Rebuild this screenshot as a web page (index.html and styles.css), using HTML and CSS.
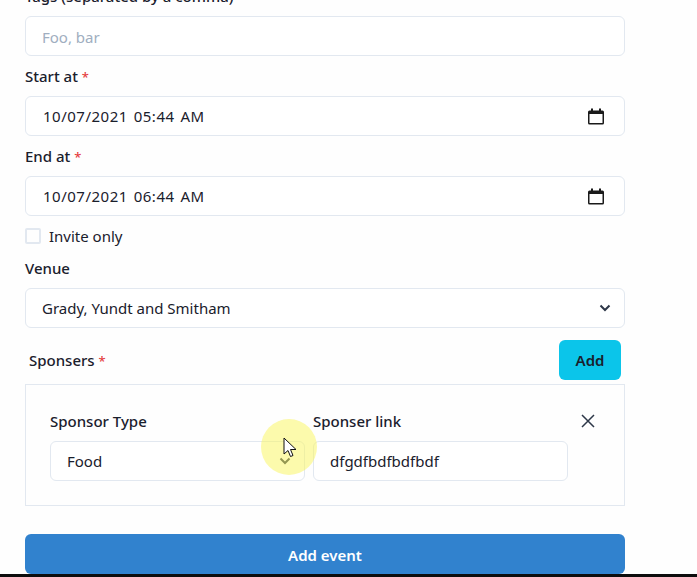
FILE: index.html
```html
<!DOCTYPE html>
<html lang="en">
<head>
    <meta charset="UTF-8">
    <title>Add event</title>
    <link rel="stylesheet" href="styles.css">
</head>
<body>
    <form class="event-form">
        <label class="field-label">Tags (separated by a comma)</label>
        <input class="field-input tags-input" type="text" placeholder="Foo, bar">

        <label class="field-label">Start at <span class="required">*</span></label>
        <div class="field-input date-input">
            <span>10/07/2021 05:44 AM</span>
            <svg class="calendar-icon" viewBox="0 0 16 17" width="16" height="17"><path d="M3 .5h2v2h6v-2h2v2h1.500A1.500 1.500 0 0 1 16 4v11a1.500 1.500 0 0 1-1.500 1.500h-13A1.500 1.500 0 0 1 0 15V4a1.500 1.500 0 0 1 1.500-1.500H3zM1.500 6v9h13V6z" fill="#1a1a1a" fill-rule="evenodd"/></svg>
        </div>

        <label class="field-label">End at <span class="required">*</span></label>
        <div class="field-input date-input">
            <span>10/07/2021 06:44 AM</span>
            <svg class="calendar-icon" viewBox="0 0 16 17" width="16" height="17"><path d="M3 .5h2v2h6v-2h2v2h1.500A1.500 1.500 0 0 1 16 4v11a1.500 1.500 0 0 1-1.500 1.500h-13A1.500 1.500 0 0 1 0 15V4a1.500 1.500 0 0 1 1.500-1.500H3zM1.500 6v9h13V6z" fill="#1a1a1a" fill-rule="evenodd"/></svg>
        </div>

        <label class="checkbox-row">
            <span class="checkbox"></span>
            <span>Invite only</span>
        </label>

        <label class="field-label">Venue</label>
        <div class="field-input select-input">
            <span>Grady, Yundt and Smitham</span>
            <svg class="chevron" viewBox="0 0 12 8" width="12" height="8"><path d="M1.500 1.500 6 6l4.500-4.500" fill="none" stroke="#2d3748" stroke-width="2"/></svg>
        </div>

        <div class="sponsors-head">
            <span class="sponsors-title">Sponsers <span class="required">*</span></span>
            <button class="add-btn" type="button">Add</button>
        </div>

        <div class="sponsor-box">
            <div class="sponsor-col">
                <label class="field-label">Sponsor Type</label>
                <div class="field-input select-input">
                    <span>Food</span>
                    <svg class="chevron" viewBox="0 0 12 8" width="12" height="8"><path d="M1.500 1.500 6 6l4.500-4.500" fill="none" stroke="#2d3748" stroke-width="2"/></svg>
                </div>
            </div>
            <div class="sponsor-col">
                <label class="field-label">Sponser link</label>
                <div class="field-input">dfgdfbdfbdfbdf</div>
            </div>
            <svg class="remove-icon" viewBox="0 0 14 14" width="14" height="14"><path d="M1 1l12 12M13 1 1 13" fill="none" stroke="#2d3748" stroke-width="1.500"/></svg>
        </div>

        <button class="submit-btn" type="button">Add event</button>
    </form>
    <div class="taskbar"></div>

    <div class="cursor-highlight"></div>
    <svg class="cursor" viewBox="0 0 14 22" width="14" height="22"><path d="M1 1v16l4-3.500 2.500 6 2.500-1-2.500-6H13z" fill="#fff" stroke="#111" stroke-width="1"/></svg>
</body>
</html>
```

FILE: styles.css
```css
* {
    margin: 0;
    padding: 0;
    box-sizing: border-box;
}

html, body {
    height: 577px;
    overflow: hidden;
}

body {
    position: relative;
    background-color: #fefefe;
    color: #1a202c;
    font-family: "Noto Sans", "Open Sans", sans-serif;
    font-size: 15px;
    line-height: 24px;
}

.event-form {
    width: 600px;
    margin-top: -16px;
    margin-left: 25px;
    display: flex;
    flex-direction: column;
}

.field-label {
    display: block;
    height: 24px;
    margin-bottom: 8px;
    font-weight: 500;
    font-size: 15px;
    color: #1a202c;
}

.required {
    color: #e53e3e;
    font-size: 13px;
}

.field-input {
    width: 100%;
    height: 40px;
    padding: 0 16px;
    border: 1px solid #e2e8f0;
    border-radius: 6px;
    background: #fff;
    color: #1a202c;
    font: inherit;
    display: flex;
    align-items: center;
    justify-content: space-between;
    margin-bottom: 8px;
}

.field-input::placeholder {
    color: #a0aec0;
}

.tags-input {
    padding-top: 1px;
}

.date-input {
    padding-left: 17px;
    padding-right: 20px;
}

.date-input span {
    letter-spacing: 0.5px;
    word-spacing: 1.5px;
}

.calendar-icon {
    flex: none;
}

.chevron {
    flex: none;
    margin-right: -3px;
}

.checkbox-row {
    display: flex;
    align-items: center;
    gap: 8px;
    height: 24px;
    margin-bottom: 8px;
}

.checkbox {
    width: 16px;
    height: 16px;
    border: 2px solid #e2e8f0;
    border-radius: 2px;
}

.sponsors-head {
    display: flex;
    align-items: center;
    justify-content: space-between;
    padding: 4px;
}

.sponsors-title {
    font-weight: 500;
}

.add-btn {
    width: 62px;
    height: 40px;
    border: none;
    border-radius: 6px;
    background: #0bc5ea;
    color: #1a202c;
    font: inherit;
    font-size: 15px;
    font-weight: 600;
}

.sponsor-box {
    display: flex;
    gap: 8px;
    height: 122px;
    padding: 24px;
    border: 1px solid #e2e8f0;
    margin-bottom: 28px;
}

.sponsor-col {
    flex: none;
    width: 255px;
}

.remove-icon {
    flex: none;
    margin: 5px 0 0 5px;
}

.submit-btn {
    height: 40px;
    padding-top: 2px;
    border: none;
    border-radius: 6px;
    background: #3182ce;
    color: #fff;
    font: inherit;
    font-weight: 600;
}

.taskbar {
    height: 10px;
    background: #0d0d0d;
}

/* screen recorder overlay */
.cursor-highlight {
    position: absolute;
    left: 261px;
    top: 419px;
    width: 56px;
    height: 56px;
    border-radius: 50%;
    background: rgba(250, 245, 90, 0.5);
}

.cursor {
    position: absolute;
    left: 283px;
    top: 437px;
}
```
